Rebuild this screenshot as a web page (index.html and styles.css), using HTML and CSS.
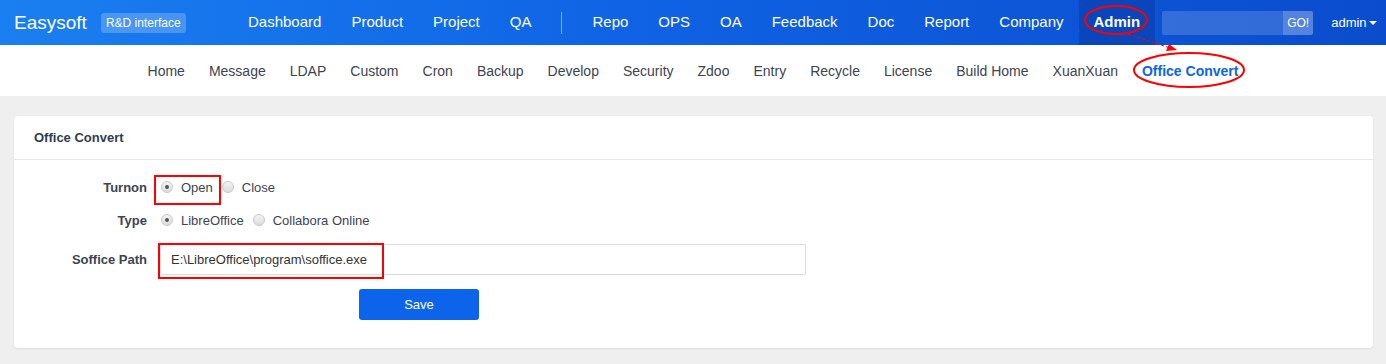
FILE: index.html
```html
<!DOCTYPE html>
<html>
  <head>
    <meta name="viewport" content="width=device-width, initial-scale=1">
    <link rel="stylesheet" href="styles.css">
  </head>

  <body>
    <!-- Barra superior -->
    <header class="topbar">
      <div class="brand">
        <span class="brand-name">Easysoft</span>
        <span class="brand-tag">R&amp;D interface</span>
      </div>
      <nav class="mainnav">
        <a href="#">Dashboard</a>
        <a href="#">Product</a>
        <a href="#">Project</a>
        <a href="#">QA</a>
        <span class="divider"></span>
        <a href="#">Repo</a>
        <a href="#">OPS</a>
        <a href="#">OA</a>
        <a href="#">Feedback</a>
        <a href="#">Doc</a>
        <a href="#">Report</a>
        <a href="#">Company</a>
        <a href="#" class="active">Admin</a>
      </nav>
      <div class="search">
        <span class="search-input"></span>
        <span class="search-btn">GO!</span>
      </div>
      <div class="user">admin <span class="caret"></span></div>
    </header>

    <!-- Sub menu -->
    <nav class="subnav">
      <a href="#">Home</a>
      <a href="#">Message</a>
      <a href="#">LDAP</a>
      <a href="#">Custom</a>
      <a href="#">Cron</a>
      <a href="#">Backup</a>
      <a href="#">Develop</a>
      <a href="#">Security</a>
      <a href="#">Zdoo</a>
      <a href="#">Entry</a>
      <a href="#">Recycle</a>
      <a href="#">License</a>
      <a href="#">Build Home</a>
      <a href="#">XuanXuan</a>
      <a href="#" class="active">Office Convert</a>
    </nav>

    <main class="content">
      <div class="panel">
        <div class="panel-heading">Office Convert</div>
        <div class="panel-body">
          <div class="form-row">
            <label class="form-label">Turnon</label>
            <div class="form-field">
              <span class="radio checked"></span><span class="radio-text">Open</span>
              <span class="radio"></span><span class="radio-text">Close</span>
            </div>
          </div>
          <div class="form-row">
            <label class="form-label">Type</label>
            <div class="form-field">
              <span class="radio checked"></span><span class="radio-text">LibreOffice</span>
              <span class="radio"></span><span class="radio-text">Collabora Online</span>
            </div>
          </div>
          <div class="form-row path-row">
            <label class="form-label">Soffice Path</label>
            <div class="form-field">
              <div class="text-input">E:\LibreOffice\program\soffice.exe</div>
            </div>
          </div>
          <div class="form-row">
            <span class="form-label"></span>
            <div class="form-field save-field">
              <button type="button" class="btn-save">Save</button>
            </div>
          </div>
        </div>
      </div>
    </main>

    <!-- Marcações em vermelho -->
    <div class="mark mark-open"></div>
    <div class="mark mark-path"></div>
    <svg class="marks" width="1386" height="364" viewBox="0 0 1386 364">
      <ellipse cx="1116" cy="20" rx="31" ry="14" fill="none" stroke="#f00" stroke-width="2"/>
      <ellipse cx="1189" cy="70" rx="55" ry="17" fill="none" stroke="#f00" stroke-width="2"/>
      <line x1="1128" y1="34" x2="1170" y2="48" stroke="#f00" stroke-width="1" stroke-dasharray="3,2"/>
      <polygon points="1177,50 1166,51 1169,44" fill="#f00"/>
    </svg>
  </body>
</html>
```

FILE: styles.css
```css
html, body {
  margin: 0;
  height: 100%;
  font-family: "Liberation Sans", Arial, sans-serif;
  background-color: #efefef;
  color: #3c4353;
  overflow: hidden;
}

a {
  text-decoration: none;
}

/* Barra superior */
.topbar {
  height: 45px;
  display: flex;
  align-items: center;
  background: linear-gradient(90deg, #1a7ff0 0%, #0f63e4 45%, #0a4ccd 100%);
  color: #fff;
}

.brand {
  display: flex;
  align-items: center;
  padding-left: 14px;
  width: 219px;
}

.brand-name {
  font-size: 19px;
}

.brand-tag {
  margin-left: 14px;
  font-size: 12px;
  padding: 3px 5px;
  border-radius: 3px;
  background-color: rgba(255, 255, 255, 0.22);
}

.mainnav {
  display: flex;
  align-items: center;
  height: 45px;
}

.mainnav a {
  color: #fff;
  font-size: 15px;
  padding: 0 15px;
  height: 45px;
  line-height: 43px;
}

.mainnav a.active {
  font-weight: bold;
  background-color: #0a45bc;
}

.mainnav .divider {
  width: 1px;
  height: 22px;
  margin: 0 15px;
  background-color: rgba(255, 255, 255, 0.45);
}

.search {
  display: flex;
  margin-left: 7px;
  height: 24px;
}

.search-input {
  width: 121px;
  background-color: rgba(255, 255, 255, 0.16);
  border-radius: 2px 0 0 2px;
}

.search-btn {
  width: 30px;
  font-size: 12px;
  line-height: 24px;
  text-align: center;
  background-color: rgba(255, 255, 255, 0.3);
  border-radius: 0 2px 2px 0;
}

.user {
  margin-left: 18px;
  font-size: 13px;
  display: flex;
  align-items: center;
}

.caret {
  display: inline-block;
  margin-left: 2px;
  border-left: 4px solid transparent;
  border-right: 4px solid transparent;
  border-top: 4px solid #fff;
}

/* Sub menu */
.subnav {
  height: 51px;
  background-color: #fff;
  display: flex;
  justify-content: center;
  align-items: center;
}

.subnav a {
  color: #3c4353;
  font-size: 14px;
  padding: 0 12px;
  line-height: 20px;
}

.subnav a.active {
  color: #0c64eb;
  font-weight: bold;
}

/* Conteúdo */
.content {
  padding: 20px 13px 0 14px;
}

.panel {
  background-color: #fff;
  border-radius: 4px;
  box-shadow: 0 1px 2px rgba(0, 0, 0, 0.08);
  height: 232px;
}

.panel-heading {
  height: 43px;
  line-height: 44px;
  padding-left: 20px;
  font-size: 13px;
  font-weight: bold;
  color: #313c52;
  border-bottom: 1px solid #e8e8e8;
}

.panel-body {
  padding-top: 14px;
}

.form-row {
  display: flex;
  align-items: center;
  height: 26px;
  margin-bottom: 7px;
}

.form-row.path-row {
  height: 31px;
  margin-top: 11px;
  margin-bottom: 16px;
}

.form-label {
  width: 133px;
  text-align: right;
  font-size: 13px;
  font-weight: bold;
  color: #3c4353;
  padding-right: 13px;
}

.form-field {
  display: flex;
  align-items: center;
  font-size: 13px;
}

.radio {
  box-sizing: border-box;
  width: 12px;
  height: 12px;
  border-radius: 50%;
  border: 1px solid #c8c8c8;
  background: linear-gradient(#f4f4f4, #dcdcdc);
  margin-left: 1px;
  position: relative;
}

.radio.checked::after {
  content: "";
  position: absolute;
  left: 3px;
  top: 3px;
  width: 4px;
  height: 4px;
  border-radius: 50%;
  background-color: #555;
}

.radio-text {
  margin-left: 8px;
  margin-right: 8px;
}

.text-input {
  box-sizing: border-box;
  width: 646px;
  height: 31px;
  line-height: 29px;
  padding-left: 10px;
  border: 1px solid #dcdcdc;
  border-radius: 2px;
  font-size: 13px;
  color: #333;
}

.save-field {
  padding-left: 199px;
}

.btn-save {
  width: 120px;
  height: 31px;
  border: none;
  border-radius: 3px;
  background-color: #0c64eb;
  color: #fff;
  font-family: "Liberation Sans", Arial, sans-serif;
  font-size: 13px;
}

/* Marcações */
.mark {
  position: absolute;
  border: 2px solid #f00;
  box-sizing: border-box;
}

.mark-open {
  left: 154px;
  top: 175px;
  width: 67px;
  height: 30px;
}

.mark-path {
  left: 158px;
  top: 243px;
  width: 226px;
  height: 36px;
}

.marks {
  position: absolute;
  left: 0;
  top: 0;
  pointer-events: none;
}
```
